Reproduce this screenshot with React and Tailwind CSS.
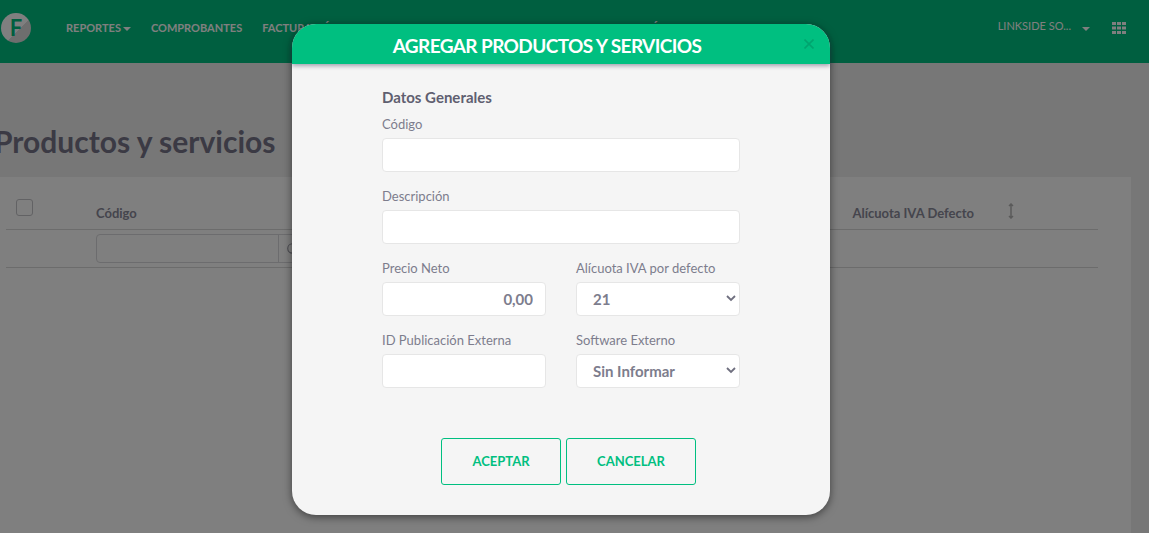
import React from "react";
import { Search } from "lucide-react";

const font = { fontFamily: '"Lato", "Liberation Sans", sans-serif' };

function Grid() {
  return (
    <svg width="14" height="12" viewBox="0 0 14 12" fill="currentColor">
      {[0, 4.5, 9].map((y) =>
        [0, 5, 10].map((x) => <rect key={`${x}-${y}`} x={x} y={y} width="4" height="3" />)
      )}
    </svg>
  );
}

function Caret({ className = "" }) {
  return (
    <svg className={className} width="8" height="4" viewBox="0 0 8 4" fill="currentColor">
      <path d="M0 0h8L4 4z" />
    </svg>
  );
}

function Chevron() {
  return (
    <svg className="absolute right-[4px] top-[13px] pointer-events-none" width="10" height="7" viewBox="0 0 10 7" fill="none" stroke="#6f6f7f" strokeWidth="1.8">
      <path d="M1 1l4 4 4-4" />
    </svg>
  );
}

function Field({ label, children, className = "" }) {
  return (
    <div className={`flex flex-col ${className}`}>
      <label className="text-[13px] leading-[17px] text-[#7d7d8d] mb-[5px]">{label}</label>
      {children}
    </div>
  );
}

const inputCls =
  "w-full h-[34px] bg-white border border-[#e6e6e6] rounded-[4px] px-[12px] text-[15px] font-bold text-[#7d7d8d] outline-none";

function Select({ value }) {
  return (
    <div className="relative">
      <select defaultValue={value} style={font} className={`${inputCls} appearance-none pl-[16px]`}>
        <option>{value}</option>
      </select>
      <Chevron />
    </div>
  );
}

export default function App() {
  return (
    <div style={font} className="relative w-[1149px] h-[533px] overflow-hidden bg-[#eeeeee]">
      <header className="h-[63px] pb-[8px] bg-[#00bf80] flex items-center text-white">
        <div className="ml-[1px] w-[30px] h-[30px] rounded-full bg-[linear-gradient(135deg,#ffffff_58%,#dcdcdc_58%)] flex items-center justify-center text-[#00bf80] text-[22px] font-bold leading-none">
          F
        </div>
        <nav className="ml-[35px] mt-[2px] flex items-center gap-[20px] text-[11px] font-bold whitespace-nowrap">
          <span className="flex items-center gap-[2px]">REPORTES<Caret /></span>
          <span>COMPROBANTES</span>
          <span>FACTURACIÓN</span>
          <span className="ml-[216px]">CONFIGURACIÓN</span>
        </nav>
        <div className="ml-auto flex items-center font-normal text-[11px]">
          <span className="-mt-[3px]">LINKSIDE SO...</span>
          <Caret className="ml-[11px] mt-[2px]" />
          <span className="ml-[22px] mr-[23px]"><Grid /></span>
        </div>
      </header>

      <main className="pt-[61px]">
        <h1 className="-ml-[6px] text-[30px] leading-[35px] font-bold text-[#767488]">Productos y servicios</h1>
        <section className="mt-[18px] w-[1131px] h-[356px] bg-white pl-[6px] pr-[33px]">
          <div className="h-[53px] border-b border-[#d8d8d8] flex items-start text-[13px] font-bold text-[#8a8a9a]">
            <span className="ml-[10px] mt-[22px] w-[17px] h-[17px] border border-[#c4c4c8] rounded-[3px]" />
            <span className="ml-[63px] mt-[27px]">Código</span>
            <span className="ml-auto mt-[27px]">Alícuota IVA Defecto</span>
            <svg className="ml-[34px] mt-[26px] mr-[84px]" width="6" height="16" viewBox="0 0 6 16" fill="none" stroke="#b5b5b5" strokeWidth="1.5">
              <path d="M3 1v14M1 3l2-2 2 2M1 13l2 2 2-2" />
            </svg>
          </div>
          <div className="h-[38px] border-b border-[#d8d8d8] flex items-center">
            <div className="ml-[90px] w-[260px] h-[29px] border border-[#d8d8dc] rounded-[4px] flex">
              <span className="w-[182px] border-r border-[#d8d8dc]" />
              <span className="pl-[7px] flex items-center text-[#9a9aa5]"><Search size={14} /></span>
            </div>
          </div>
        </section>
      </main>

      <div className="absolute inset-0 bg-[rgba(0,0,0,0.5)]" />

      <div className="absolute left-[292px] top-[24px] w-[538px] h-[491px] bg-[#f5f5f5] rounded-[24px] shadow-[0_2px_8px_rgba(0,0,0,0.5)] flex flex-col">
        <div className="relative h-[40px] pt-[5px] pr-[28px] bg-[#00bf80] rounded-t-[24px] shadow-[0_2px_4px_rgba(60,60,90,0.45)] flex items-center justify-center text-white text-[19px] font-bold tracking-[-0.6px]">
          AGREGAR PRODUCTOS Y SERVICIOS
          <svg className="absolute right-[16px] top-[15px]" width="10" height="10" viewBox="0 0 10 10" fill="none" stroke="#00a56f" strokeWidth="1.6">
            <path d="M0.5 0.5l9 9M9.5 0.5l-9 9" />
          </svg>
        </div>

        <form className="mx-[90px] w-[358px] pt-[24px] flex flex-col">
          <div className="text-[15px] leading-[18px] font-bold text-[#5f5f70] mb-[10px]">Datos Generales</div>
          <Field label="Código" className="mb-[16px]">
            <input style={font} className={inputCls} />
          </Field>
          <Field label="Descripción" className="mb-[16px]">
            <input style={font} className={inputCls} />
          </Field>
          <div className="grid grid-cols-2 gap-x-[30px] gap-y-[16px]">
            <Field label="Precio Neto">
              <input style={font} defaultValue="0,00" className={`${inputCls} text-right`} />
            </Field>
            <Field label="Alícuota IVA por defecto">
              <Select value="21" />
            </Field>
            <Field label="ID Publicación Externa">
              <input style={font} className={inputCls} />
            </Field>
            <Field label="Software Externo">
              <Select value="Sin Informar" />
            </Field>
          </div>
        </form>

        <div className="mt-[50px] ml-[149px] flex gap-[5px] text-[13px] font-bold text-[#00bf80]">
          <button style={font} className="w-[120px] h-[47px] border border-[#00bf80] rounded-[3px]">ACEPTAR</button>
          <button style={font} className="w-[130px] h-[47px] border border-[#00bf80] rounded-[3px]">CANCELAR</button>
        </div>
      </div>
    </div>
  );
}
